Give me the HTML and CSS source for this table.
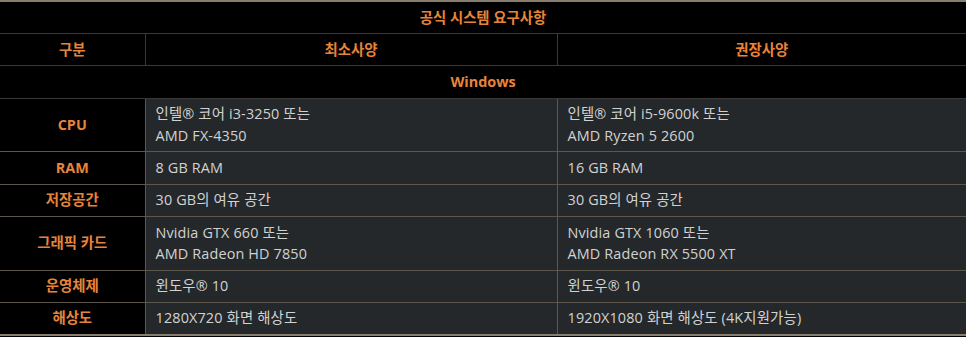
FILE: index.html
```html
<!DOCTYPE html>
<html lang="ko">
<head>
<meta charset="utf-8">
<title>공식 시스템 요구사항</title>
<link rel="stylesheet" href="styles.css">
</head>
<body>
<table class="spec">
  <colgroup>
    <col class="c1">
    <col class="c2">
    <col class="c3">
  </colgroup>
  <tr class="head"><th colspan="3">공식 시스템 요구사항</th></tr>
  <tr class="head"><th>구분</th><th>최소사양</th><th>권장사양</th></tr>
  <tr class="head os"><th colspan="3">Windows</th></tr>
  <tr><th>CPU</th><td>인텔® 코어 i3-3250 또는<br>AMD FX-4350</td><td>인텔® 코어 i5-9600k 또는<br>AMD Ryzen 5 2600</td></tr>
  <tr><th>RAM</th><td>8 GB RAM</td><td>16 GB RAM</td></tr>
  <tr><th>저장공간</th><td>30 GB의 여유 공간</td><td>30 GB의 여유 공간</td></tr>
  <tr><th>그래픽 카드</th><td>Nvidia GTX 660 또는<br>AMD Radeon HD 7850</td><td>Nvidia GTX 1060 또는<br>AMD Radeon RX 5500 XT</td></tr>
  <tr><th>운영체제</th><td>윈도우® 10</td><td>윈도우® 10</td></tr>
  <tr class="last"><th>해상도</th><td>1280X720 화면 해상도</td><td>1920X1080 화면 해상도 (4K지원가능)</td></tr>
</table>
</body>
</html>
```
FILE: styles.css
```css
html, body {
  margin: 0;
  padding: 0;
  background: #000;
}
body {
  font-family: "Open Sans", "Noto Sans CJK KR", sans-serif;
  font-size: 14.4px;
  line-height: 21.6px;
}
.spec {
  width: 966px;
  border-collapse: collapse;
  table-layout: fixed;
  border-top: 2px solid #877e70;
}
.c1 { width: 145px; }
.c2 { width: 412px; }
.c3 { width: auto; }
.spec th, .spec td {
  padding: 4.8px 10px;
  border: 1px solid #5e574d;
  vertical-align: middle;
}
.spec tr > :first-child { border-left: none; }
.spec tr > :last-child { border-right: none; }
.spec th {
  background: #000;
  color: #e8843a;
  font-weight: bold;
  text-align: center;
}
.spec td {
  background: #24282a;
  color: #d2d2d2;
  text-align: left;
  letter-spacing: 0.15px;
}
.spec .head th {
  border-color: #3a3836;
}
.spec .head th:first-child { border-left: none; }
.spec .last th, .spec .last td {
  border-bottom: 2px solid #877e70;
}
```
